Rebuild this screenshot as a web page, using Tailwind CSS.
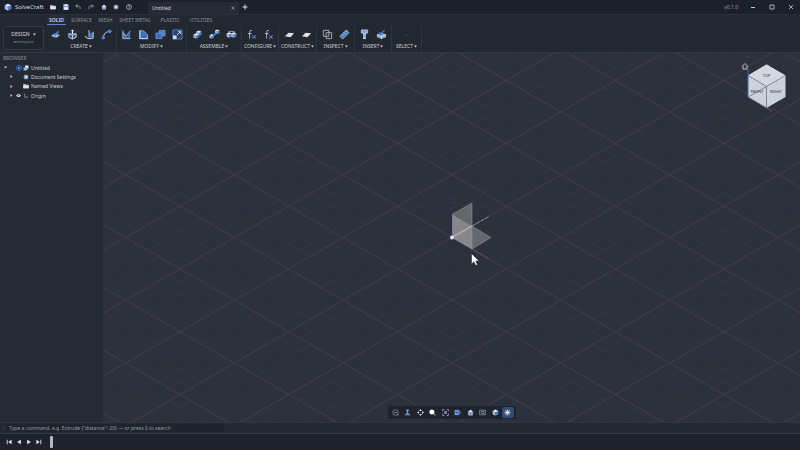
<!DOCTYPE html>
<html lang="en">
<head>
<meta charset="utf-8">
<meta name="viewport" content="width=device-width, initial-scale=1">
<title>SolveCraft</title>
<script src="https://cdn.jsdelivr.net/npm/@tailwindcss/browser@4"></script>
</head>
<body class="flex h-screen flex-col overflow-hidden bg-[#242932] font-['Noto_Sans',sans-serif] text-[5px] leading-[8px] text-[#c3c8d2]">

<svg class="hidden" aria-hidden="true">
  <symbol id="cube" viewBox="0 0 12 12"><path d="M6 1 11 3.500 6 6 1 3.500Z" fill="#e3e8f2"/><path d="M1 3.500 6 6V11.500L1 9Z" fill="#a9bad8"/><path d="M11 3.500 6 6V11.500L11 9Z" fill="#4d82cf"/></symbol>
  <symbol id="home" viewBox="0 0 12 12"><path d="M6 .8 11.500 6H.5Z" fill="#d5dae4"/><path d="M2.200 6H9.800V11H2.200Z" fill="#bcc8de"/><path d="M4.500 7H7.500V11H4.500Z" fill="#4d82cf"/></symbol>
  <symbol id="gear" viewBox="0 0 12 12"><path d="M6 .5V11.500M.5 6H11.500M2 2 10 10M10 2 2 10" stroke="#8c9dbd" stroke-width="1.800"/><circle cx="6" cy="6" r="3.600" fill="#b7c6e0"/><circle cx="6" cy="6" r="1.500" fill="#fff"/></symbol>
  <symbol id="folder" viewBox="0 0 12 12"><path d="M.5 2H5L6.500 3.500H11.500V10.500H.5Z" fill="#b7bbc4"/><path d="M.5 5H11.500V10.500H.5Z" fill="#e2e4e8"/></symbol>
  <symbol id="plane" viewBox="0 0 12 12"><path d="M1 8 5 4 11 4.500 7 9Z" fill="#dfe0e0"/></symbol>
  <symbol id="fx" viewBox="0 0 12 12"><path d="M6.500 1.800C4.800 1 4 1.800 4 3.500V10.500M2 5H6" fill="none" stroke="#b9bec9" stroke-width="1"/><path d="M7 7 10.500 10.500M10.500 7 7 10.500" stroke="#4583d3" stroke-width="1.200"/></symbol>
  <symbol id="prev" viewBox="0 0 8 8"><path d="M6.500 1V7L1.500 4Z" fill="#e1e4ea"/></symbol>
  <symbol id="first" viewBox="0 0 8 8"><path d="M7.500 1V7L3 4ZM1 1H2.200V7H1Z" fill="#e1e4ea"/></symbol>
</svg>

<header class="flex h-[14px] shrink-0 items-center bg-[#1b202a]">
  <div class="flex w-[47px] items-center gap-[3px] pl-[4px]">
    <svg class="size-[8px]"><use href="#cube"/></svg>
    <span class="text-[6px] text-[#d5d9e1]">SolveCraft</span>
  </div>
  <nav aria-label="Quick access" class="flex w-[88px]">
    <button aria-label="Open" class="flex flex-1 justify-center"><svg class="size-[6px]"><use href="#folder"/></svg></button>
    <button aria-label="Save" class="flex flex-1 justify-center"><svg class="size-[6px]" viewBox="0 0 12 12"><path d="M.5 .5H10L11.500 2V11.500H.5Z" fill="#7c9fd6"/><path d="M3 .5H9V4H3ZM2 6.500H10V11.500H2Z" fill="#e9edf5"/></svg></button>
    <button aria-label="Undo" class="flex flex-1 justify-center"><svg class="size-[6px]" viewBox="0 0 12 12"><path d="M5 1 1.500 4 5 7M1.500 4H7C10 4 11 6.500 10 10" fill="none" stroke="#a9afbb" stroke-width="1.500"/></svg></button>
    <button aria-label="Redo" class="flex flex-1 justify-center"><svg class="size-[6px]" viewBox="0 0 12 12"><path d="M7 1 10.500 4 7 7M10.500 4H5C2 4 1 6.500 2 10" fill="none" stroke="#a9afbb" stroke-width="1.500"/></svg></button>
    <button aria-label="Home" class="flex flex-1 justify-center"><svg class="size-[6px]"><use href="#home"/></svg></button>
    <button aria-label="Settings" class="flex flex-1 justify-center"><svg class="size-[6px]"><use href="#gear"/></svg></button>
    <button aria-label="Help" class="flex flex-1 justify-center"><svg class="size-[6px]" viewBox="0 0 12 12"><circle cx="6" cy="6" r="5" fill="none" stroke="#b9bec9" stroke-width="1.400"/><path d="M4.200 4.800C4.200 2.500 7.800 2.500 7.800 4.600 7.800 6 6 5.800 6 7.500M6 8.300V9.600" fill="none" stroke="#d5d9e1" stroke-width="1.300"/></svg></button>
  </nav>
  <div class="ml-[13px] flex h-[12px] w-[91px] items-center justify-between self-end rounded-t-[2px] bg-[#252a34] px-[4px] text-[#d5d9e1]">
    <span>Untitled</span>
    <button aria-label="Close tab"><svg class="size-[4px]" viewBox="0 0 8 8"><path d="M1 1 7 7M7 1 1 7" stroke="#9a9fab" stroke-width="1.500"/></svg></button>
  </div>
  <button aria-label="New tab" class="ml-[3px]"><svg class="size-[6px]" viewBox="0 0 12 12"><path d="M6 1V11M1 6H11" stroke="#dadde4" stroke-width="2"/></svg></button>
  <span class="mr-[5px] ml-auto text-[#979ca8]">v0.1.0</span>
  <div class="flex w-[57px]">
    <button aria-label="Minimize" class="flex flex-1 justify-center"><svg class="size-[6px]" viewBox="0 0 6 6"><path d="M1 3.500H5" stroke="#c5c9d2"/></svg></button>
    <button aria-label="Maximize" class="flex flex-1 justify-center"><svg class="size-[6px]" viewBox="0 0 6 6"><path d="M1 1H5V5H1Z" fill="none" stroke="#c5c9d2" stroke-width=".8"/></svg></button>
    <button aria-label="Close" class="flex flex-1 justify-center"><svg class="size-[6px]" viewBox="0 0 6 6"><path d="M1 1 5 5M5 1 1 5" stroke="#c5c9d2" stroke-width=".8"/></svg></button>
  </div>
</header>

<section aria-label="Ribbon" class="flex h-[39px] shrink-0 border-t border-b border-t-[#2a2f3a] border-b-[#343844] bg-[#222730]">
  <button class="mt-[11px] ml-[3px] flex h-[24px] w-[41px] flex-col items-center justify-center rounded-[2px] border border-[#343944] bg-[#1f242d] text-[#d5d9e1]">
    <span class="flex items-center gap-[3px]">DESIGN <svg class="size-[3px]" viewBox="0 0 6 6"><path d="M0 1H6L3 5Z" fill="#d5d9e1"/></svg></span>
    <span class="text-[4px] text-[#8c919d]">workspace</span>
  </button>
  <div class="ml-[2px] flex flex-col">
    <nav aria-label="Ribbon tabs" class="flex h-[10px] items-stretch pl-[1px] text-[#8d929e]">
      <button class="w-[19px] border-b border-[#5b8ad0] bg-[#272d38] font-medium text-[#e1e4ea]">SOLID</button>
      <button class="w-[31px]">SURFACE</button>
      <button class="w-[17px]">MESH</button>
      <button class="w-[42px]">SHEET METAL</button>
      <button class="w-[28px]">PLASTIC</button>
      <button class="w-[34px]">UTILITIES</button>
    </nav>
    <div class="flex h-[27px] items-stretch text-[#cdd1d9]">
      <div class="flex w-[71px] flex-col items-center gap-[2px] border-r border-[#2f343e] pt-[4px]">
        <div class="flex gap-[6px]">
          <button aria-label="Sketch"><svg class="size-[11px]" viewBox="0 0 12 12"><path d="M1 7.500 5 5 11 6.500 7 9.500Z" fill="#a6bde2"/><path d="M4 6.800 8.500 2 10 3.200 6 8Z" fill="#4583d3"/></svg></button>
          <button aria-label="Extrude"><svg class="size-[11px]" viewBox="0 0 12 12"><path d="M2 5 6 3.500 10 5 6 7Z" fill="#4583d3"/><path d="M2 5V9L6 11 10 9V5L6 7ZM6 7V11" fill="#46536a" stroke="#cbd3e1"/><path d="M6 5.500V1M4.500 2.500 6 1 7.500 2.500" fill="none" stroke="#fff"/></svg></button>
          <button aria-label="Revolve"><svg class="size-[11px]" viewBox="0 0 12 12"><path d="M6 4H10V10H6Z" fill="#3d71b9"/><path d="M5.500 1V9M1.500 7.500C2 10.500 7 11.500 10 9.500V3" fill="none" stroke="#b7c6df" stroke-width="1.100"/></svg></button>
          <button aria-label="Sweep"><svg class="size-[11px]" viewBox="0 0 12 12"><path d="M2.500 9.500C3 5 5 3 9.500 2.500" fill="none" stroke="#cdd3df"/><circle cx="2.500" cy="9.500" r="2" fill="#4583d3"/><circle cx="9.500" cy="2.500" r="2" fill="#4583d3"/></svg></button>
        </div>
        <button class="flex items-center gap-[1px]">CREATE<svg class="size-[3px]" viewBox="0 0 6 6"><path d="M0 1H6L3 5Z" fill="#cdd1d9"/></svg></button>
      </div>
      <div class="flex w-[70px] flex-col items-center gap-[2px] border-r border-[#2f343e] pt-[4px]">
        <div class="flex gap-[6px]">
          <button aria-label="Fillet"><svg class="size-[11px]" viewBox="0 0 12 12"><path d="M2 2 7 10H2ZM10 2V10H6Z" fill="#3d71b9"/><path d="M2 1.500V10.500H10.500M10 2 5.500 8 2.500 4" fill="none" stroke="#b5c6e2" stroke-width=".9"/></svg></button>
          <button aria-label="Chamfer"><svg class="size-[11px]" viewBox="0 0 12 12"><path d="M2 2H6L10.500 6.500V10.500H2Z" fill="#3d71b9" stroke="#91b0de"/><path d="M2 1.500V10.500H11" fill="none" stroke="#cbd6e9"/></svg></button>
          <button aria-label="Combine"><svg class="size-[11px]" viewBox="0 0 12 12"><path d="M4.500 1.500H11V7.500H4.500Z" fill="#4a7fc9" stroke="#749dd6" stroke-width=".8"/><path d="M1 4.500H7.500V10.500H1Z" fill="#3b70b9" stroke="#749dd6" stroke-width=".8"/></svg></button>
          <button aria-label="Scale"><svg class="size-[11px]" viewBox="0 0 12 12"><path d="M1 1H11V11H1Z" fill="#2b4266" stroke="#4583d3"/><path d="M1 7H5V11H1Z" fill="#cbd6e9"/><path d="M5.500 6.500 9 3M6.500 2.500H9.500V5.500" fill="none" stroke="#dfe6f2"/></svg></button>
        </div>
        <button class="flex items-center gap-[1px]">MODIFY<svg class="size-[3px]" viewBox="0 0 6 6"><path d="M0 1H6L3 5Z" fill="#cdd1d9"/></svg></button>
      </div>
      <div class="flex w-[55px] flex-col items-center gap-[2px] border-r border-[#2f343e] pt-[4px]">
        <div class="flex gap-[6px]">
          <button aria-label="New component"><svg class="size-[11px]" viewBox="0 0 12 12"><use href="#cube" x="4" y="1" width="7" height="7"/><use href="#cube" x="1" y="4" width="7" height="7"/></svg></button>
          <button aria-label="Joint"><svg class="size-[11px]" viewBox="0 0 12 12"><use href="#cube" x="6" y="0" width="6" height="6"/><use href="#cube" x="0" y="5" width="6" height="6"/><path d="M4.500 7 8 4.500" stroke="#4583d3" stroke-width="2"/></svg></button>
          <button aria-label="Rigid group"><svg class="size-[11px]" viewBox="0 0 12 12"><use href="#cube" x="0" y="3" width="7" height="7"/><use href="#cube" x="5" y="3" width="7" height="7"/><path d="M2 3.500 6 2.500 10 3.500" fill="none" stroke="#9ab6e2"/></svg></button>
        </div>
        <button class="flex items-center gap-[1px]">ASSEMBLE<svg class="size-[3px]" viewBox="0 0 6 6"><path d="M0 1H6L3 5Z" fill="#cdd1d9"/></svg></button>
      </div>
      <div class="flex w-[37px] flex-col items-center gap-[2px] border-r border-[#2f343e] pt-[4px]">
        <div class="flex gap-[6px]">
          <button aria-label="Parameters"><svg class="size-[11px]"><use href="#fx"/></svg></button>
          <button aria-label="Configurations"><svg class="size-[11px]"><use href="#fx"/></svg></button>
        </div>
        <button class="flex items-center gap-[1px]">CONFIGURE<svg class="size-[3px]" viewBox="0 0 6 6"><path d="M0 1H6L3 5Z" fill="#cdd1d9"/></svg></button>
      </div>
      <div class="flex w-[38px] flex-col items-center gap-[2px] border-r border-[#2f343e] pt-[4px]">
        <div class="flex gap-[6px]">
          <button aria-label="Offset plane"><svg class="size-[11px]"><use href="#plane"/></svg></button>
          <button aria-label="Midplane"><svg class="size-[11px]"><use href="#plane"/></svg></button>
        </div>
        <button class="flex items-center gap-[1px]">CONSTRUCT<svg class="size-[3px]" viewBox="0 0 6 6"><path d="M0 1H6L3 5Z" fill="#cdd1d9"/></svg></button>
      </div>
      <div class="flex w-[38px] flex-col items-center gap-[2px] border-r border-[#2f343e] pt-[4px]">
        <div class="flex gap-[6px]">
          <button aria-label="Interference"><svg class="size-[11px]" viewBox="0 0 12 12"><path d="M1.500 1.500H7.500V8H1.500ZM4.500 4H10.500V10.500H4.500Z" fill="none" stroke="#a9afbb"/></svg></button>
          <button aria-label="Measure"><svg class="size-[11px]" viewBox="0 0 12 12"><path d="M1 8 8 1 11 4 4 11Z" fill="#4f7fc0" stroke="#afc3e4" stroke-width=".8"/><path d="M3.500 6 5 7.500M5.500 4 7 5.500M7.500 2 9 3.500" stroke="#d5dff0" stroke-width=".7"/></svg></button>
        </div>
        <button class="flex items-center gap-[1px]">INSPECT<svg class="size-[3px]" viewBox="0 0 6 6"><path d="M0 1H6L3 5Z" fill="#cdd1d9"/></svg></button>
      </div>
      <div class="flex w-[37px] flex-col items-center gap-[2px] border-r border-[#2f343e] pt-[4px]">
        <div class="flex gap-[6px]">
          <button aria-label="Insert fastener"><svg class="size-[11px]" viewBox="0 0 12 12"><path d="M2.500 1H9.500V4.500H2.500Z" fill="#7fa5dc" stroke="#d4deef" stroke-width=".7"/><path d="M4.500 4.500H7.500V11H4.500Z" fill="#c9d3e4"/><path d="M4.500 6.500H7.500M4.500 8.500H7.500" stroke="#4583d3" stroke-width=".7"/></svg></button>
          <button aria-label="Insert mesh"><svg class="size-[11px]" viewBox="0 0 12 12"><path d="M1 6 6 4 11 6V9L6 11 1 9Z" fill="#91a9cf"/><path d="M1 6 6 8 11 6M6 8V11" fill="none" stroke="#e1e8f4" stroke-width=".8"/><path d="M4 6 9.500 1.500M4 3.500V6H7" fill="none" stroke="#4583d3" stroke-width="1.400"/></svg></button>
        </div>
        <button class="flex items-center gap-[1px]">INSERT<svg class="size-[3px]" viewBox="0 0 6 6"><path d="M0 1H6L3 5Z" fill="#cdd1d9"/></svg></button>
      </div>
      <div class="flex w-[30px] flex-col items-center gap-[2px] border-r border-[#2f343e] pt-[4px]">
        <button aria-label="Select"><svg class="size-[11px]" viewBox="0 0 12 12"><path d="M3 6.500H9" stroke="#383d47"/></svg></button>
        <button class="flex items-center gap-[1px]">SELECT<svg class="size-[3px]" viewBox="0 0 6 6"><path d="M0 1H6L3 5Z" fill="#cdd1d9"/></svg></button>
      </div>
    </div>
  </div>
</section>

<main class="flex min-h-0 flex-1">
  <aside class="w-[104px] shrink-0 border-r border-[#2c313b] bg-[#242932]">
    <h2 class="h-[10px] pt-[1px] pl-[3px] text-[#8d929e]">BROWSER</h2>
    <ul class="text-[#c9cdd6]">
      <li class="flex h-[9px] items-center pl-[4px]">
        <button aria-label="Collapse Untitled"><svg class="size-[3px]" viewBox="0 0 6 6"><path d="M0 1H6L3 5Z" fill="#c9cdd6"/></svg></button>
        <svg class="ml-[9px] size-[6px]" viewBox="0 0 12 12"><circle cx="6" cy="6" r="5" fill="#1f4077" stroke="#3f78c9" stroke-width="1.500"/><circle cx="6" cy="6" r="2" fill="#5b91dd"/></svg>
        <svg class="ml-[1px] size-[6px]" viewBox="0 0 12 12"><path d="M4 1H11V7H4Z" fill="#dce2ec"/><path d="M1 5H6V11H1Z" fill="#9fb3d4"/><path d="M6 7H9V10H6Z" fill="#bcc8dd"/></svg>
        <span class="ml-[2px]">Untitled</span>
      </li>
      <li class="flex h-[9px] items-center pl-[10px]">
        <button aria-label="Expand Document Settings"><svg class="size-[3px]" viewBox="0 0 6 6"><path d="M1 0V6L5 3Z" fill="#c9cdd6"/></svg></button>
        <svg class="ml-[10px] size-[6px]"><use href="#gear"/></svg>
        <span class="ml-[2px]">Document Settings</span>
      </li>
      <li class="flex h-[10px] items-center pl-[10px]">
        <button aria-label="Expand Named Views"><svg class="size-[3px]" viewBox="0 0 6 6"><path d="M1 0V6L5 3Z" fill="#c9cdd6"/></svg></button>
        <svg class="ml-[10px] size-[6px]"><use href="#folder"/></svg>
        <span class="ml-[2px]">Named Views</span>
      </li>
      <li class="flex h-[9px] items-center pl-[10px]">
        <button aria-label="Expand Origin"><svg class="size-[3px]" viewBox="0 0 6 6"><path d="M1 0V6L5 3Z" fill="#c9cdd6"/></svg></button>
        <button aria-label="Hide Origin" class="ml-[3px]"><svg class="size-[5px]" viewBox="0 0 10 10"><path d="M0 5C3 1 7 1 10 5 7 9 3 9 0 5Z" fill="#d8dbe2"/><circle cx="5" cy="5" r="1.500" fill="#4b5567"/></svg></button>
        <svg class="ml-[2px] size-[6px]" viewBox="0 0 12 12"><path d="M3 1V9" stroke="#4583d3" stroke-width="1.500"/><path d="M3 9H11M3 5 9 8" stroke="#7c8597" stroke-width="1.200"/></svg>
        <span class="ml-[2px]">Origin</span>
      </li>
    </ul>
  </aside>

  <section aria-label="Viewport" class="relative min-w-0 flex-1 overflow-hidden bg-[#2b303c]">
    <svg class="absolute inset-0 size-full" aria-hidden="true">
      <defs>
        <pattern id="minor" width="21.760" height="12.560" patternUnits="userSpaceOnUse"><path d="M0 0 21.760 12.560M0 12.560 21.760 0" stroke="#343843" stroke-width=".5"/></pattern>
        <pattern id="major" width="108.800" height="62.800" patternUnits="userSpaceOnUse"><path d="M0 0 108.800 62.800M0 62.800 108.800 0" stroke="#45464f" stroke-width=".6"/></pattern>
      </defs>
      <svg x="50%" y="50%" overflow="visible">
        <rect x="-3000" y="-3000" width="6000" height="6000" fill="url(#minor)"/>
        <rect x="-3000" y="-3000" width="6000" height="6000" fill="url(#major)"/>
        <path d="M0 -23V-42M2.500 -23V-42" stroke="#36426a" stroke-width=".6" stroke-dasharray="3 2"/>
        <path d="M0 0 0 -23 20 -34.500V-11.500Z" fill="#c4c2c0" fill-opacity=".38"/>
        <path d="M0 0 20 -11.500 39 0 20 11.500Z" fill="#c4c2c0" fill-opacity=".38"/>
        <path d="M0 0V-23L20 -11.500V11.500Z" fill="#c4c2c0" fill-opacity=".35"/>
        <path d="M0 -23 20 -34.500V11.500M20 -11.500 39 0 20 11.500 0 0" fill="none" stroke="#9b9b9c" stroke-width=".5"/>
        <path d="M0 0 20 -11.500" stroke="#c4c4c4"/>
        <path d="M20 -11.500 37 -21" stroke="#a5a5a5" stroke-width=".8" stroke-dasharray="4 1"/>
        <path d="M20 11.500 37 21.500" stroke="#5b5c60" stroke-width=".8"/>
        <path d="M.5 0V-23" stroke="#8c6cae"/>
        <circle r="2" fill="#e4e4e4"/>
        <path d="M19.500 16V26.500L22 24.200 23.700 28 25.500 27.200 23.800 23.500H27Z" fill="#fff" stroke="#1b1f27" stroke-width=".5"/>
      </svg>
    </svg>

    <svg class="absolute top-[8px] right-[10px] h-[54px] w-[50px] font-['Noto_Sans',sans-serif]" viewBox="0 0 50 54" role="img" aria-label="View cube">
      <path d="M2 5.500 5 2.500 8 5.500M3 5V8H7V5" fill="none" stroke="#c5c9d2" stroke-width=".9"/>
      <path d="M26.500 3.500 45.500 14.500V36L26.500 47 8 36V14.500Z" fill="#cdd1db"/>
      <path d="M26.500 3.500 45.500 14.500 26.500 25.500 8 14.500Z" fill="#d3d7e0"/>
      <path d="M8 14.500 26.500 25.500V47M26.500 25.500 45.500 14.500M8 36 26.500 25.500" fill="none" stroke="#61656e" stroke-width=".7"/>
      <path d="M8 36 32 50" stroke="#6f7177" stroke-width=".8"/>
      <path d="M8 8V36" stroke="#4468b8"/>
      <g fill="#333842" font-size="4" text-anchor="middle"><text x="26.500" y="16">TOP</text><text x="17" y="32">FRONT</text><text x="36" y="32">RIGHT</text></g>
    </svg>

    <div role="toolbar" aria-label="Navigation" class="absolute bottom-[3px] left-1/2 flex h-[13px] w-[128px] -translate-x-1/2 items-center rounded-[2px] bg-[#1e232d] pr-[2px] pl-[1px]">
      <button aria-label="Orbit" class="flex h-[11px] flex-1 items-center justify-center"><svg class="size-[7px]" viewBox="0 0 12 12"><circle cx="6" cy="6" r="4.800" fill="none" stroke="#979da9" stroke-width="1.200"/><path d="M4 6H8" stroke="#c5c9d2" stroke-width="1.200"/><circle cx="10" cy="9.500" r="1.600" fill="#4583d3"/></svg></button>
      <button aria-label="Look at" class="flex h-[11px] flex-1 items-center justify-center"><svg class="size-[7px]" viewBox="0 0 12 12"><path d="M4 1H8V4H7V8H5V4H4Z" fill="#9aa3b4"/><path d="M3 7.500H9L11 10.500H1Z" fill="#8a92a2"/><path d="M6 8H9.500L11 10.500H6Z" fill="#4583d3"/></svg></button>
      <button aria-label="Pan" class="flex h-[11px] flex-1 items-center justify-center"><svg class="size-[7px]" viewBox="0 0 12 12"><path d="M6 0 8.500 3.500H3.500ZM6 12 8.500 8.500H3.500ZM0 6 3.500 3.500V8.500ZM12 6 8.500 3.500V8.500Z" fill="#ced2da"/></svg></button>
      <button aria-label="Zoom" class="flex h-[11px] flex-1 items-center justify-center"><svg class="size-[7px]" viewBox="0 0 12 12"><circle cx="5" cy="5" r="4.300" fill="#fff"/><path d="M8 8 11 11" stroke="#9ba1ad" stroke-width="1.800"/></svg></button>
      <button aria-label="Fit" class="flex h-[11px] flex-1 items-center justify-center"><svg class="size-[7px]" viewBox="0 0 12 12"><path d="M1 4V1H4M8 1H11V4M11 8V11H8M4 11H1V8" fill="none" stroke="#a4aab6" stroke-width="1.300"/><path d="M3.500 3.500H8.500V8.500H3.500Z" fill="#7186ab"/></svg></button>
      <button aria-label="Section" class="flex h-[11px] flex-1 items-center justify-center"><svg class="size-[7px]" viewBox="0 0 12 12"><path d="M1 1.500H9V10.500H1Z" fill="#8799b9"/><path d="M3 4H12V8H3Z" fill="#3973c4"/></svg></button>
      <button aria-label="Home view" class="flex h-[11px] flex-1 items-center justify-center"><svg class="size-[7px]"><use href="#home"/></svg></button>
      <button aria-label="Camera" class="flex h-[11px] flex-1 items-center justify-center"><svg class="size-[7px]" viewBox="0 0 12 12"><path d="M1 2H11V10H1Z" fill="none" stroke="#8c929e" stroke-width="1.200"/><circle cx="6" cy="6" r="2.200" fill="none" stroke="#b3b8c2" stroke-width="1.200"/><path d="M8 4 11 2M8 8 11 10" stroke="#8c929e"/></svg></button>
      <button aria-label="Visual style" class="flex h-[11px] flex-1 items-center justify-center"><svg class="size-[7px]"><use href="#cube"/></svg></button>
      <button aria-label="Display settings" aria-pressed="true" class="flex h-[11px] flex-1 items-center justify-center rounded-[2px] bg-[#374b75]"><svg class="size-[7px]"><use href="#gear"/></svg></button>
    </div>
  </section>
</main>

<form class="flex h-[12px] shrink-0 items-center border-t border-b border-t-[#2f343e] border-b-[#343944] bg-[#232831] pl-[3px]">
  <label for="command" class="w-[4px] text-[#6d7380]">›</label>
  <input id="command" type="text" class="h-[8px] w-[217px] rounded-[1px] bg-[#1e232c] pl-[2px] placeholder:text-[#959aa5]" placeholder="Type a command, e.g. Extrude {&quot;distance&quot;: 20} — or press S to search">
</form>

<footer aria-label="Timeline" class="flex h-[16px] shrink-0 items-center bg-[#1d222c] pl-[4px]">
  <button aria-label="First" class="flex w-[10px] justify-center"><svg class="size-[6px]"><use href="#first"/></svg></button>
  <button aria-label="Previous" class="flex w-[10px] justify-center"><svg class="size-[6px]"><use href="#prev"/></svg></button>
  <button aria-label="Play" class="flex w-[10px] justify-center"><svg class="size-[6px] rotate-180"><use href="#prev"/></svg></button>
  <button aria-label="Last" class="flex w-[10px] justify-center"><svg class="size-[6px] rotate-180"><use href="#first"/></svg></button>
  <div class="ml-[6px] h-[12px] w-[3px] rounded-[1px] bg-[#b4b8c1]"></div>
</footer>
</body>
</html>
